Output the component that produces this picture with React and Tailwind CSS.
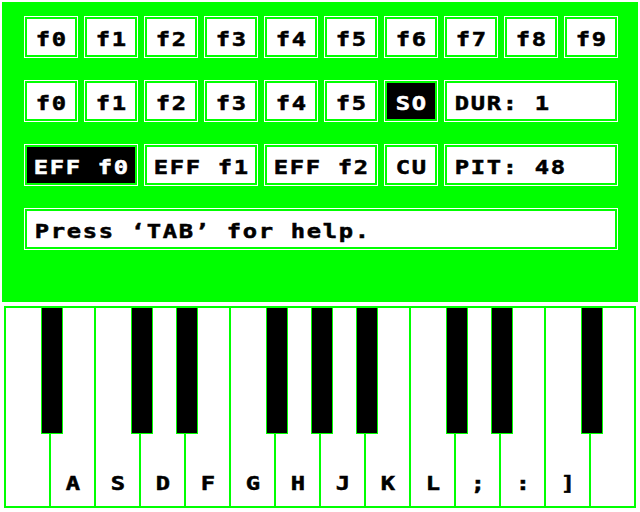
import React from "react";

const FONT = { fontFamily: '"DejaVu Sans Mono", "Liberation Mono", monospace' };

function Txt({ s }) {
  return (
    <span
      className="flex font-bold text-[19px] leading-[20px] mt-[3px] [-webkit-text-stroke:0.5px_currentColor]"
      style={FONT}
    >
      {s.split("").map((c, i) => (
        <span key={i} className="inline-block w-[16px] text-center scale-x-125">
          {c === " " ? "\u00a0" : c}
        </span>
      ))}
    </span>
  );
}

function Btn({ label, span = "", inverted = false, left = false }) {
  return (
    <div className={`border border-white p-[2px] ${span}`}>
      <div
        className={`h-full flex items-center ${left ? "justify-start pl-[7px]" : "justify-center"} ${
          inverted ? "bg-black text-white" : "bg-white text-black"
        }`}
      >
        <Txt s={label} />
      </div>
    </div>
  );
}

const labels = ["", "A", "S", "D", "F", "G", "H", "J", "K", "L", ";", ":", "]", ""];
const blacks = [0, 2, 3, 5, 6, 7, 9, 10, 12];

export default function App() {
  const row1 = ["f0", "f1", "f2", "f3", "f4", "f5", "f6", "f7", "f8", "f9"];
  const row2 = ["f0", "f1", "f2", "f3", "f4", "f5"];
  return (
    <div className="w-[640px] h-[512px] bg-white p-[2px] overflow-hidden">
      <div className="w-[636px] h-[300px] bg-[#00ff00] pt-[14px] pl-[22px]">
        <div className="grid grid-cols-[repeat(10,54px)] auto-rows-[42px] gap-x-[6px] gap-y-[22px]">
          {row1.map((l) => (
            <Btn key={"a" + l} label={l} />
          ))}
          {row2.map((l) => (
            <Btn key={"b" + l} label={l} />
          ))}
          <Btn label="SO" inverted />
          <Btn label="DUR: 1" span="col-span-3" left />
          <Btn label="EFF f0" span="col-span-2" inverted />
          <Btn label="EFF f1" span="col-span-2" />
          <Btn label="EFF f2" span="col-span-2" />
          <Btn label="CU" />
          <Btn label="PIT: 48" span="col-span-3" left />
          <Btn label="Press ‘TAB’ for help." span="col-span-10" left />
        </div>
      </div>
      <div className="relative mt-[4px] ml-[2px] w-[632px] h-[202px] bg-[#00ff00] p-[2px] flex gap-[2px]">
        {labels.map((l, i) => (
          <div key={i} className="w-[43px] h-full bg-white flex flex-col justify-end items-center pb-[13px]">
            {l ? <Txt s={l} /> : null}
          </div>
        ))}
        {blacks.map((k) => (
          <div
            key={"bk" + k}
            className="absolute top-[1px] h-[127px] w-[22px] bg-black border border-[#00ff00]"
            style={{ left: 37 + 45 * k }}
          />
        ))}
      </div>
    </div>
  );
}
